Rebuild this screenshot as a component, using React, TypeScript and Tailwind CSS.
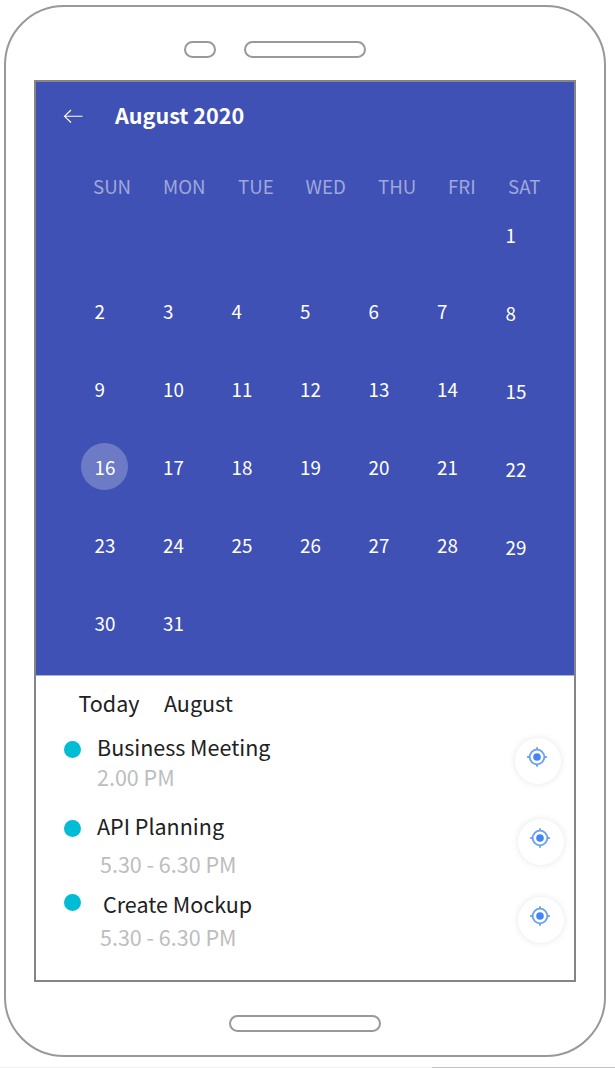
import React from "react";

const weekdays = [
  { name: "SUN", cls: "ml-[57px] w-[70px]" },
  { name: "MON", cls: "w-[75px]" },
  { name: "TUE", cls: "w-[67.5px]" },
  { name: "WED", cls: "w-[72.5px]" },
  { name: "THU", cls: "w-[70px]" },
  { name: "FRI", cls: "w-[60px]" },
  { name: "SAT", cls: "" },
];

const columns: number[][] = [
  [2, 9, 16, 23, 30],
  [3, 10, 17, 24, 31],
  [4, 11, 18, 25],
  [5, 12, 19, 26],
  [6, 13, 20, 27],
  [7, 14, 21, 28],
  [1, 8, 15, 22, 29],
];

const events = [
  {
    title: "Business Meeting",
    time: "2.00 PM",
    row: "h-[79px]",
    dot: "mt-[6px]",
    titleCls: "pl-[16px]",
    timeCls: "mt-[6px] pl-[16px]",
    target: "mt-[3px] mr-[12px]",
  },
  {
    title: "API Planning",
    time: "5.30 - 6.30 PM",
    row: "h-[78px]",
    dot: "mt-[6px]",
    titleCls: "pl-[16px]",
    timeCls: "mt-[14px] pl-[19px]",
    target: "mt-[5px] mr-[9px]",
  },
  {
    title: "Create Mockup",
    time: "5.30 - 6.30 PM",
    row: "h-[78px]",
    dot: "mt-[2px]",
    titleCls: "pl-[22px]",
    timeCls: "mt-[9px] pl-[19px]",
    target: "mt-[5px] mr-[9px]",
  },
];

function BackArrow() {
  return (
    <svg className="mt-[27px] ml-[27px] h-[14px] w-[20px]" viewBox="0 0 20 14" fill="none" stroke="#fff" strokeWidth="1.1">
      <path d="M19.5 7.3H1.5M8 1L1.5 7.3L8 13.5" />
    </svg>
  );
}

function TargetButton({ className }: { className: string }) {
  return (
    <button
      className={
        "flex h-[46px] w-[46px] shrink-0 rounded-full bg-white pt-[9px] pl-[12px] shadow-[0_0_7px_rgba(0,0,0,0.1)] " +
        className
      }
      aria-label="Locate"
    >
      <svg className="h-[20px] w-[20px]" viewBox="0 0 21 21" fill="none" stroke="#6a9ff6" strokeWidth="1.9">
        <circle cx="10.5" cy="10.5" r="7.7" />
        <circle cx="10.5" cy="10.5" r="4" fill="#4285f4" stroke="none" />
        <path d="M10.5 0.2V3M10.5 18V20.8M0.2 10.5H3M18 10.5H20.8" />
      </svg>
    </button>
  );
}

export default function App() {
  return (
    <div className="h-[1068px] w-[615px] overflow-hidden bg-white pt-[5px] pl-[4px] font-['Noto_Sans_CJK_SC',sans-serif]">
      <div className="flex h-[1052px] w-[602px] flex-col rounded-[60px] border-2 border-[#999999]">
        <div className="mt-[34px] flex gap-[28px] pl-[178px]">
          <div className="h-[17px] w-[32px] rounded-full border-2 border-[#999999]" />
          <div className="h-[17px] w-[122px] rounded-full border-2 border-[#999999]" />
        </div>
        <div className="mt-[22px] ml-[28px] flex h-[902px] w-[542px] shrink-0 flex-col border-2 border-[#858585]">
          <section className="h-[594px] shrink-0 border-b border-[#a9b1de] bg-[#3f51b5] text-white">
            <div className="flex h-[94px]">
              <BackArrow />
              <h1 className="mt-[21px] ml-[32px] text-[21.6px] leading-[24px] font-bold">August 2020</h1>
            </div>
            <div className="flex text-[18.7px] leading-[20px] text-[#9fa8da]">
              {weekdays.map((day) => (
                <span key={day.name} className={day.cls}>
                  {day.name}
                </span>
              ))}
            </div>
            <div className="mt-[29px] ml-[58.5px] flex text-[18.8px] leading-[20px]">
              {columns.map((days, i) => (
                <div key={i} className={"flex w-[68.5px] shrink-0 flex-col gap-[58px] " + (i < 6 ? "pt-[76px]" : "")}>
                  {days.map((d) =>
                    d === 16 ? (
                      <span key={d} className="relative">
                        <span className="absolute top-[-14.5px] left-[-13.5px] h-[47px] w-[47px] rounded-full bg-[#7986cb]/80" />
                        <span className="relative">{d}</span>
                      </span>
                    ) : (
                      <span key={d}>{d}</span>
                    )
                  )}
                </div>
              ))}
            </div>
          </section>
          <section className="text-[21.5px] leading-[24px] text-[#212121]">
            <div className="flex h-[59px] gap-[24.5px] pt-[15px] pl-[42.5px]">
              <span>Today</span>
              <span>August</span>
            </div>
            {events.map((e) => (
              <div key={e.title} className={"flex " + e.row}>
                <div className={"ml-[28px] h-[17px] w-[17px] shrink-0 rounded-full bg-[#00bcd4] " + e.dot} />
                <div className="flex-1">
                  <div className={e.titleCls}>{e.title}</div>
                  <div className={"text-[#bdbdbd] " + e.timeCls}>{e.time}</div>
                </div>
                <TargetButton className={e.target + " relative -left-px"} />
              </div>
            ))}
          </section>
        </div>
        <div className="mt-[33px] ml-[223px] h-[17px] w-[152px] shrink-0 rounded-full border-2 border-[#999999]" />
      </div>
      <div className="mt-[10px] -ml-[4px] flex h-px">
        <div className="w-[432px] bg-[#f0f0f0]" />
        <div className="flex-1 bg-[#c4c4c4]" />
      </div>
    </div>
  );
}
